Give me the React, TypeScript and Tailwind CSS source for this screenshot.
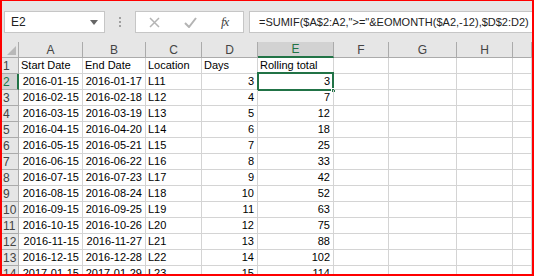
import React from 'react';

const COLS = ['A', 'B', 'C', 'D', 'E', 'F', 'G', 'H', ''];

const ROWS: string[][] = [
  ['Start Date', 'End Date', 'Location', 'Days', 'Rolling total'],
  ['2016-01-15', '2016-01-17', 'L11', '3', '3'],
  ['2016-02-15', '2016-02-18', 'L12', '4', '7'],
  ['2016-03-15', '2016-03-19', 'L13', '5', '12'],
  ['2016-04-15', '2016-04-20', 'L14', '6', '18'],
  ['2016-05-15', '2016-05-21', 'L15', '7', '25'],
  ['2016-06-15', '2016-06-22', 'L16', '8', '33'],
  ['2016-07-15', '2016-07-23', 'L17', '9', '42'],
  ['2016-08-15', '2016-08-24', 'L18', '10', '52'],
  ['2016-09-15', '2016-09-25', 'L19', '11', '63'],
  ['2016-10-15', '2016-10-26', 'L20', '12', '75'],
  ['2016-11-15', '2016-11-27', 'L21', '13', '88'],
  ['2016-12-15', '2016-12-28', 'L22', '14', '102'],
  ['2017-01-15', '2017-01-29', 'L23', '15', '114'],
];

const GRID = 'grid grid-cols-[17px_64px_63px_56px_56px_76px_55px_68px_56px_1fr]';

const FormulaBar: React.FC = () => (
  <div className="h-[41px] bg-[#e6e6e6] flex items-start pt-[10px] pl-[2px]">
    <div className="w-[101px] h-[22px] bg-white border border-[#c6c6c6] flex items-center justify-between pl-[6px] pr-[6px] text-[12px] text-[#222]">
      <span>E2</span>
      <svg width="8" height="5" viewBox="0 0 8 5">
        <path d="M0 0 L8 0 L4 5 Z" fill="#666" />
      </svg>
    </div>
    <div className="w-[30px] h-[22px] flex flex-col items-center justify-center gap-[2px]">
      <span className="w-[2px] h-[2px] bg-[#a0a0a0]" />
      <span className="w-[2px] h-[2px] bg-[#a0a0a0]" />
      <span className="w-[2px] h-[2px] bg-[#a0a0a0]" />
    </div>
    <div className="w-[109px] h-[22px] bg-white border border-[#c6c6c6] flex items-center pl-[13px] gap-[24px]">
      <svg width="11" height="11" viewBox="0 0 11 11">
        <path d="M1 1 L10 10 M10 1 L1 10" stroke="#b4b4b4" strokeWidth="1.5" />
      </svg>
      <svg width="13" height="11" viewBox="0 0 13 11">
        <path d="M1 6 L5 10 L12 1" stroke="#b4b4b4" strokeWidth="2" fill="none" />
      </svg>
      <span className="italic text-[13px] text-[#444] font-['Liberation_Serif',serif] tracking-[-1px]">fx</span>
    </div>
    <div className="ml-[5px] flex-1 h-[22px] bg-white border border-r-0 border-[#c6c6c6] flex items-center pl-[9px] text-[11px] text-[#222] whitespace-nowrap overflow-hidden">
      =SUMIF($A$2:A2,"&gt;="&amp;EOMONTH($A2,-12),$D$2:D2)
    </div>
  </div>
);

const App: React.FC = () => {
  return (
    <div className="w-[534px] h-[276px] overflow-hidden border-t border-x-2 border-b-2 border-[#ff0000] bg-white font-['Liberation_Sans',Arial,sans-serif]">
      <FormulaBar />

      {/* column headers */}
      <div className={`${GRID} h-[16px] bg-[#e6e6e6] text-[12px] text-[#444]`}>
        <div className="border-r border-b border-[#ababab] relative">
          <svg className="absolute right-[2px] bottom-[2px]" width="9" height="9" viewBox="0 0 9 9">
            <path d="M9 0 L9 9 L0 9 Z" fill="#b8b8b8" />
          </svg>
        </div>
        {COLS.map((c, i) => (
          <div
            key={i}
            className={
              c === 'E'
                ? 'bg-[#d2d2d2] border-r border-[#ababab] border-b-2 border-b-[#217346] text-[#217346] flex items-center justify-center leading-none'
                : 'border-r border-b border-[#ababab] flex items-center justify-center leading-none'
            }
          >
            {c}
          </div>
        ))}
      </div>

      {/* rows */}
      {ROWS.map((row, r) => (
        <div key={r} className={`${GRID} h-[16px] text-[11px] text-black`}>
          <div
            className={
              r === 1
                ? 'bg-[#d2d2d2] border-b border-[#ababab] border-r-2 border-r-[#217346] text-[#217346] text-[12px] flex items-center pl-[1px] leading-none'
                : 'bg-[#e6e6e6] border-r border-b border-[#ababab] text-[#444] text-[12px] flex items-center pl-[1px] leading-none'
            }
          >
            {r + 1}
          </div>
          {COLS.map((_, c) => {
            const v = row[c] ?? '';
            const right = r > 0 && (c === 0 || c === 1 || c === 3 || c === 4);
            return (
              <div
                key={c}
                className={`relative border-r border-b border-[#d4d4d4] flex items-center leading-none whitespace-nowrap ${
                  right ? 'justify-end pr-[3px]' : 'pl-[2px]'
                }`}
              >
                {v}
                {r === 1 && c === 4 && (
                  <>
                    <span className="absolute -left-px -top-[2px] right-[-1px] bottom-[-2px] border-2 border-[#217346]" />
                    <span className="absolute right-[-3px] bottom-[-4px] w-[5px] h-[5px] bg-[#217346] border border-white" />
                  </>
                )}
              </div>
            );
          })}
        </div>
      ))}
    </div>
  );
};

export default App;
